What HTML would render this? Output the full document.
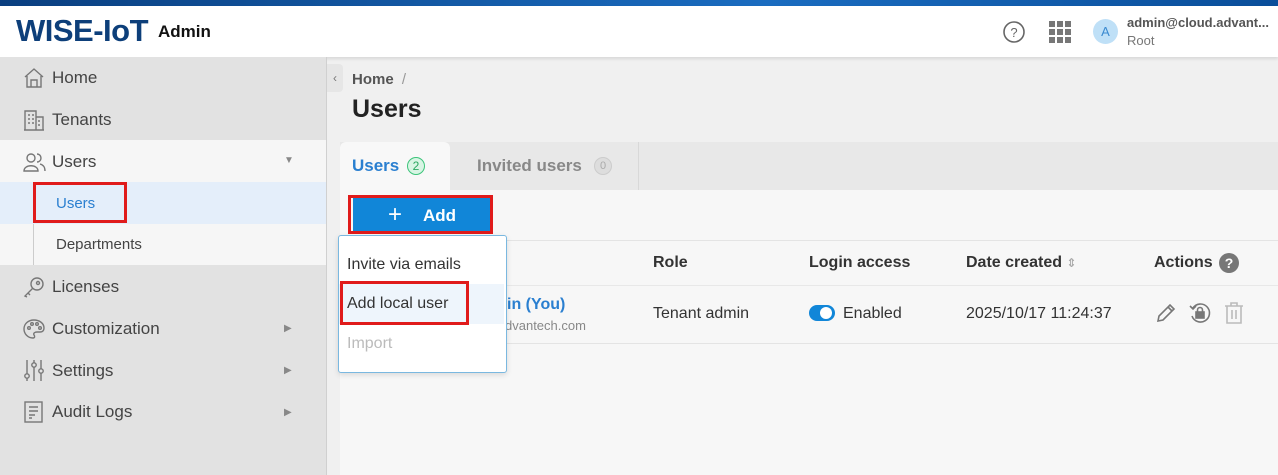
<!DOCTYPE html><html><head><style>
body{margin:0;width:1278px;height:475px;overflow:hidden;font-family:"Liberation Sans","DejaVu Sans",sans-serif;background:#f0f0f0;position:relative;color:#333}
.a{position:absolute}
.nav{font-size:17px;color:#444}
.ic{stroke:#777;fill:none;stroke-width:1.4}
.red{border:3px solid #e01b1b;box-sizing:border-box}
.arr{color:#888;font-size:10px}
</style></head><body>
<div class="a" style="left:0;top:0;width:1278px;height:6px;background:linear-gradient(90deg,#0a3f80,#1a6cc0 60%,#0a4e9a)"></div>
<div class="a" style="left:0;top:6px;width:1278px;height:51px;background:#fff;box-shadow:0 2px 3px rgba(0,0,0,.1)"></div>
<div class="a" style="left:16px;top:13px;font-size:31px;font-weight:bold;color:#0d3f7a;letter-spacing:-0.5px">WISE-IoT</div>
<div class="a" style="left:158px;top:22px;font-size:17px;font-weight:bold;color:#111">Admin</div>
<svg class="a" style="left:1002px;top:20px" width="24" height="24"><circle cx="12" cy="12" r="10" stroke="#666" stroke-width="1.6" fill="none"/><text x="12" y="17" font-size="13" text-anchor="middle" fill="#666" font-family="Liberation Sans">?</text></svg>
<svg class="a" style="left:1049px;top:21px" width="22" height="22" fill="#777"><rect x="0" y="0" width="6" height="6"/><rect x="8" y="0" width="6" height="6"/><rect x="16" y="0" width="6" height="6"/><rect x="0" y="8" width="6" height="6"/><rect x="8" y="8" width="6" height="6"/><rect x="16" y="8" width="6" height="6"/><rect x="0" y="16" width="6" height="6"/><rect x="8" y="16" width="6" height="6"/><rect x="16" y="16" width="6" height="6"/></svg>
<div class="a" style="left:1093px;top:19px;width:25px;height:25px;border-radius:50%;background:#bfe0f7;color:#3a8ad0;font-size:13px;text-align:center;line-height:25px">A</div>
<div class="a" style="left:1127px;top:15px;font-size:13px;font-weight:bold;color:#555">admin@cloud.advant...</div>
<div class="a" style="left:1127px;top:33px;font-size:13px;color:#777">Root</div>

<div class="a" style="left:0;top:57px;width:326px;height:418px;background:#e2e2e2;border-right:1px solid #d0d0d0"></div>
<div class="a" style="left:0;top:140px;width:326px;height:125px;background:#f6f6f6"></div>
<div class="a" style="left:0;top:182px;width:326px;height:42px;background:#e4eefa"></div>
<div class="a" style="left:33px;top:183px;width:2px;height:40px;background:#2a7fd0"></div>
<div class="a" style="left:33px;top:224px;width:1px;height:41px;background:#ccc"></div>
<svg class="a ic" style="left:23px;top:67px" width="22" height="22"><path d="M2 10 L11 2 L20 10 M4 9 V20 H18 V9 M8 20 V13 H14 V20"/></svg>
<div class="a nav" style="left:52px;top:68px">Home</div>
<svg class="a ic" style="left:23px;top:109px" width="22" height="22"><path d="M2 21 V2 H13 V21 M13 8 H20 V21 M1 21 H21 M5 6h2M9 6h2M5 10h2M9 10h2M5 14h2M9 14h2M15 12h2M15 16h2"/></svg>
<div class="a nav" style="left:52px;top:110px">Tenants</div>
<svg class="a ic" style="left:23px;top:151px" width="24" height="22"><circle cx="8" cy="7" r="4"/><path d="M1 20 C1 13 15 13 15 20 Z M14 3 A4 4 0 0 1 14 11 M17 13 C21 14 22 17 22 20"/></svg>
<div class="a nav" style="left:52px;top:152px">Users</div>
<div class="a arr" style="left:284px;top:155px">▼</div>
<div class="a" style="left:56px;top:195px;font-size:15px;color:#2a7fd0">Users</div>
<div class="a red" style="left:33px;top:182px;width:94px;height:41px"></div>
<div class="a" style="left:56px;top:236px;font-size:15px;color:#444">Departments</div>
<svg class="a ic" style="left:23px;top:276px" width="22" height="22"><circle cx="14" cy="8" r="6"/><circle cx="15" cy="7" r="1.5"/><path d="M10 12 L2 20 L4 21 M5 17 L7 19"/></svg>
<div class="a nav" style="left:52px;top:277px">Licenses</div>
<svg class="a ic" style="left:23px;top:318px" width="22" height="22"><path d="M11 2 C5 2 1 6 1 11 C1 16 5 20 10 20 C12 20 12 18 11 17 C10 15 12 14 14 14 H17 C20 14 21 12 21 10 C21 5 16 2 11 2 Z"/><circle cx="6" cy="10" r="1.3"/><circle cx="9" cy="6" r="1.3"/><circle cx="14" cy="6" r="1.3"/><circle cx="17" cy="10" r="1.3"/></svg>
<div class="a nav" style="left:52px;top:319px">Customization</div>
<div class="a arr" style="left:284px;top:323px">▶</div>
<svg class="a ic" style="left:23px;top:359px" width="22" height="24"><path d="M4 1V22M11 1V22M18 1V22"/><circle cx="4" cy="17" r="2.2" fill="#e2e2e2"/><circle cx="11" cy="6" r="2.2" fill="#e2e2e2"/><circle cx="18" cy="12" r="2.2" fill="#e2e2e2"/></svg>
<div class="a nav" style="left:52px;top:361px">Settings</div>
<div class="a arr" style="left:284px;top:365px">▶</div>
<svg class="a ic" style="left:23px;top:401px" width="22" height="22"><rect x="2" y="1" width="17" height="20"/><path d="M6 6H15M6 10H15M6 14H12M6 17H9"/></svg>
<div class="a nav" style="left:52px;top:402px">Audit Logs</div>
<div class="a arr" style="left:284px;top:407px">▶</div>

<div class="a" style="left:327px;top:64px;width:16px;height:28px;background:#e6e6e6;border-radius:0 4px 4px 0;color:#777;font-size:12px;text-align:center;line-height:28px">‹</div>
<div class="a" style="left:352px;top:71px;font-size:15px;font-weight:bold;color:#555">Home <span style="font-weight:normal;color:#999;margin-left:4px">/</span></div>
<div class="a" style="left:352px;top:95px;font-size:25px;font-weight:bold;color:#222">Users</div>
<div class="a" style="left:340px;top:142px;width:938px;height:48px;background:#e8e8e8"></div>
<div class="a" style="left:340px;top:142px;width:110px;height:48px;background:#f8f8f8;border-radius:6px 6px 0 0"></div>
<div class="a" style="left:352px;top:156px;font-size:17px;font-weight:bold;color:#2a7fd0">Users</div>
<div class="a" style="left:407px;top:157px;width:16px;height:16px;border:1.5px solid #3cc47a;border-radius:50%;background:#d8f5e4;color:#2aa860;font-size:12px;text-align:center;line-height:16px">2</div>
<div class="a" style="left:477px;top:156px;font-size:17px;font-weight:bold;color:#888">Invited users</div>
<div class="a" style="left:594px;top:157px;width:16px;height:16px;border:1.5px solid #ccc;border-radius:50%;background:#ddd;color:#aaa;font-size:11px;text-align:center;line-height:16px">0</div>
<div class="a" style="left:638px;top:142px;width:1px;height:48px;background:#d8d8d8"></div>
<div class="a" style="left:340px;top:190px;width:938px;height:285px;background:#f7f7f7"></div>
<div class="a" style="left:340px;top:240px;width:938px;height:1px;background:#e4e4e4"></div>
<div class="a" style="left:340px;top:285px;width:938px;height:1px;background:#e8e8e8"></div>
<div class="a" style="left:340px;top:343px;width:938px;height:1px;background:#e4e4e4"></div>
<div class="a" style="left:353px;top:198px;width:138px;height:34px;background:#1186d8"></div>
<div class="a" style="left:388px;top:201px;font-size:24px;color:#fff;font-weight:300">+</div>
<div class="a" style="left:423px;top:206px;font-size:17px;font-weight:bold;color:#fff">Add</div>
<div class="a red" style="left:348px;top:195px;width:145px;height:39px"></div>
<div class="a" style="left:653px;top:254px;font-size:16px;font-weight:bold;color:#333">Role</div>
<div class="a" style="left:809px;top:254px;font-size:16px;font-weight:bold;color:#333">Login access</div>
<div class="a" style="left:966px;top:254px;font-size:16px;font-weight:bold;color:#333">Date created <span style="color:#aaa;font-size:12px">⇕</span></div>
<div class="a" style="left:1154px;top:254px;font-size:16px;font-weight:bold;color:#333">Actions</div>
<div class="a" style="left:1219px;top:253px;width:20px;height:20px;border-radius:50%;background:#777;color:#fff;font-size:14px;font-weight:bold;text-align:center;line-height:20px">?</div>
<div class="a" style="left:507px;top:296px;font-size:16px;font-weight:bold;color:#2a7fd0">in (You)</div>
<div class="a" style="left:505px;top:318px;font-size:13px;color:#888">dvantech.com</div>
<div class="a" style="left:653px;top:305px;font-size:16px;color:#333">Tenant admin</div>
<div class="a" style="left:809px;top:305px;width:26px;height:16px;border-radius:8px;background:#1186d8"></div>
<div class="a" style="left:820px;top:307px;width:12px;height:12px;border-radius:50%;background:#fff"></div>
<div class="a" style="left:843px;top:305px;font-size:16px;color:#333">Enabled</div>
<div class="a" style="left:966px;top:305px;font-size:16px;color:#333">2025/10/17 11:24:37</div>
<svg class="a" style="left:1155px;top:302px" width="22" height="22" fill="none" stroke="#777" stroke-width="1.6"><path d="M3 19 L4 14 L15 3 L19 7 L8 18 Z M13 5 L17 9"/></svg>
<svg class="a" style="left:1188px;top:301px" width="24" height="24" fill="none" stroke="#777" stroke-width="1.6"><path d="M5 7 A9 9 0 1 1 4 15 M2 5 L5 8 L8 5"/><rect x="8" y="11" width="8" height="6" fill="#777"/><path d="M9.5 11 V9 A2.5 2.5 0 0 1 14.5 9 V11"/></svg>
<svg class="a" style="left:1224px;top:302px" width="20" height="22" fill="none" stroke="#bbb" stroke-width="1.6"><path d="M1 4H19M7 4V1H13V4M3 4V21H17V4M8 8V17M12 8V17"/></svg>

<div class="a" style="left:338px;top:235px;width:167px;height:136px;background:#fff;border:1px solid #7ab8e0;border-radius:3px;box-shadow:0 2px 6px rgba(0,0,0,.12)"></div>
<div class="a" style="left:347px;top:256px;font-size:16px;color:#333">Invite via emails</div>
<div class="a" style="left:339px;top:284px;width:165px;height:40px;background:#eef5fc"></div>
<div class="a" style="left:347px;top:295px;font-size:16px;color:#333">Add local user</div>
<div class="a red" style="left:340px;top:281px;width:129px;height:44px"></div>
<div class="a" style="left:347px;top:335px;font-size:16px;color:#bbb">Import</div>
</body></html>
